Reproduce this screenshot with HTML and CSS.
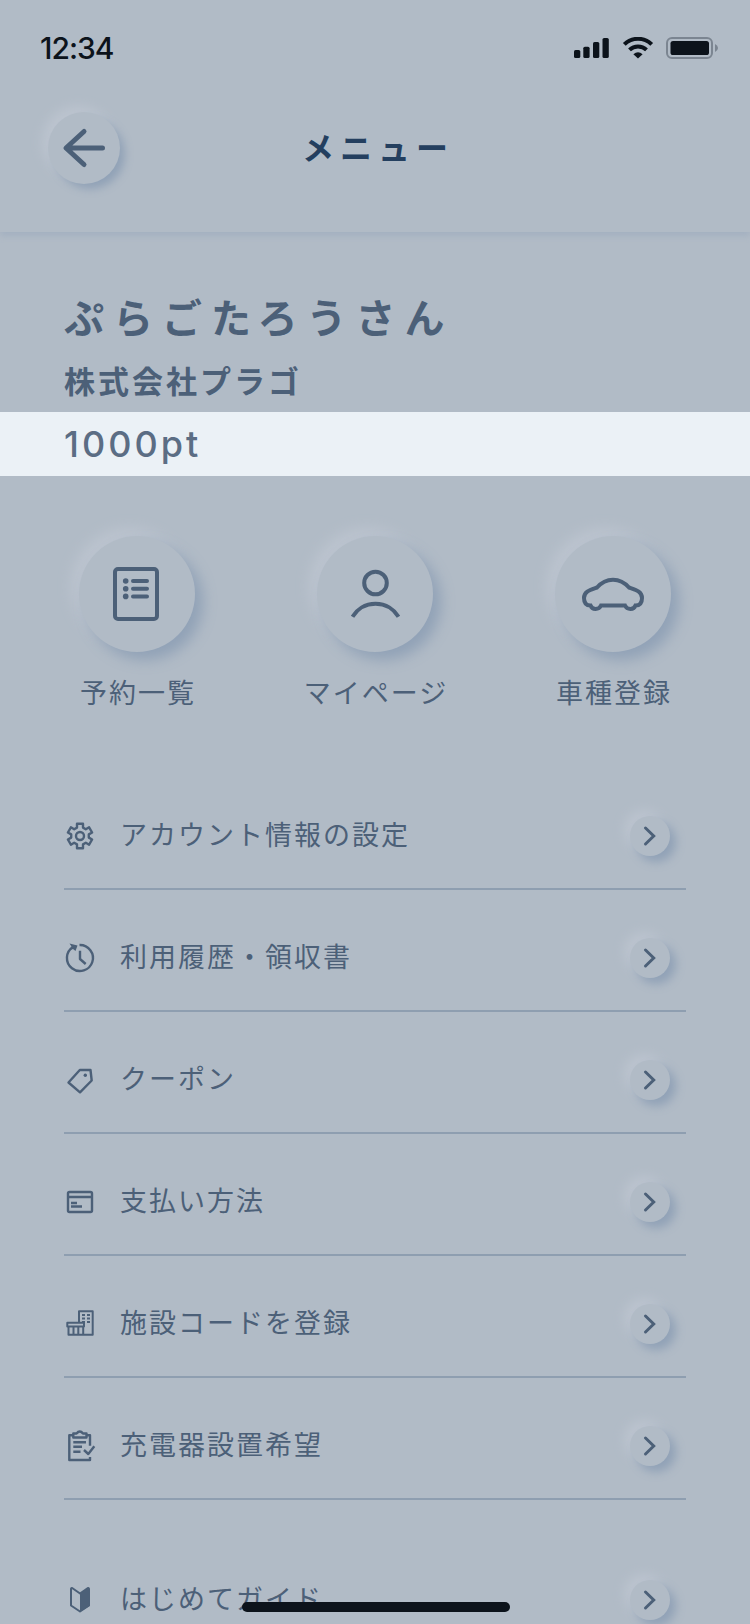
FILE: index.html
```html
<!DOCTYPE html>
<html lang="ja">
<head>
<meta charset="utf-8">
<meta name="viewport" content="width=device-width, initial-scale=1">
<title>メニュー</title>
<link rel="stylesheet" href="styles.css">
</head>
<body>
<div class="screen">
  <header class="header">
    <div class="status">
      <time class="clock">12:34</time>
      <div class="status-icons">
        <svg class="signal" viewBox="0 0 36 22" aria-hidden="true"><rect x="0" y="13" width="6.3" height="8" rx="1.6"/><rect x="9.3" y="9.7" width="6.3" height="11.3" rx="1.6"/><rect x="19" y="5" width="6.3" height="16" rx="1.6"/><rect x="28.5" y="1" width="6.3" height="20" rx="1.6"/></svg>
        <svg class="wifi" viewBox="0 0 30 22" aria-hidden="true"><path class="arc" d="M1.3 7.4A19.5 19.5 0 0 1 28.7 7.4M6.5 12.9A12.3 12.3 0 0 1 23.5 12.9"/><path d="M15 21.6L10.4 17.3Q15 13.4 19.6 17.3Z"/></svg>
        <svg class="battery" viewBox="0 0 54 22" aria-hidden="true"><rect class="case" x="1" y="1" width="45" height="20" rx="5"/><rect x="4.5" y="4" width="38.5" height="14" rx="2.6"/><path class="nub" d="M49 7Q52 8.500 52 11T49 15Z"/></svg>
      </div>
    </div>
    <div class="titlebar">
      <button class="back" type="button" aria-label="戻る"><svg viewBox="0 0 48 48" aria-hidden="true"><path d="M24 7.500L6 24L24 40.500M7 24H42.500"/><path class="tip" d="M6 24L12 18.500V29.500Z"/></svg></button>
      <h1 class="title">メニュー</h1>
    </div>
  </header>

  <main class="content">
    <section class="profile">
      <h2 class="name">ぷらごたろうさん</h2>
      <p class="company">株式会社プラゴ</p>
      <p class="points">1000pt</p>
    </section>

    <nav class="shortcuts" aria-label="ショートカット">
      <a class="shortcut" href="#reservations"><span class="disc"><svg viewBox="0 0 64 64" aria-hidden="true"><rect x="10" y="7" width="42" height="50" rx="3"/><path class="round" d="M28 19H42M28 26.700H42M28 34.400H42"/><g class="solid"><circle cx="20.700" cy="19" r="2.800"/><circle cx="20.700" cy="26.700" r="2.800"/><circle cx="20.700" cy="34.400" r="2.800"/></g></svg></span><span class="caption">予約一覧</span></a>
      <a class="shortcut" href="#mypage"><span class="disc"><svg viewBox="0 0 64 64" aria-hidden="true"><circle cx="32.500" cy="21" r="11.300"/><path d="M9.500 54.700A27 27 0 0 1 55.500 54.700"/></svg></span><span class="caption">マイページ</span></a>
      <a class="shortcut" href="#cars"><span class="disc"><svg viewBox="0 0 64 64" aria-hidden="true"><path d="M16 25.500C25 15 39 15 48 25.500C55 28 61 29.500 61 36C61 40 59.500 43.500 54.500 43.500C53 48 46 48 44 43.500H20C18 48 11 48 9.500 43.500C4.500 43.500 3 40 3 36C3 29.500 9 28 16 25.500Z"/></svg></span><span class="caption">車種登録</span></a>
    </nav>

    <ul class="menu">
      <li><a class="item" href="#account"><svg class="icon" viewBox="0 0 32 32" aria-hidden="true"><path d="M13 3.800H19V7.600L21.800 9.200L25.100 7.300L28.100 12.500L24.800 14.400V17.600L28.100 19.500L25.100 24.700L21.800 22.800L19 24.400V28.200H13V24.400L10.200 22.800L6.900 24.700L3.900 19.500L7.200 17.600V14.400L3.900 12.500L6.900 7.300L10.200 9.200L13 7.600Z"/><circle cx="16" cy="16" r="4"/></svg><span class="label">アカウント情報の設定</span><span class="go"><svg viewBox="0 0 24 24" aria-hidden="true"><path d="M7.500 4L15.700 12L7.500 20"/></svg></span></a></li>
      <li><a class="item" href="#history"><svg class="icon" viewBox="0 0 32 32" aria-hidden="true"><path d="M15.500 3A13 13 0 1 1 9 5M16 8.700V17L21.700 22"/><path class="solid" d="M5.500 1.500L13.500 3.500L11.500 9L9 7L6 8L7.500 4.500Z"/></svg><span class="label">利用履歴・領収書</span><span class="go"><svg viewBox="0 0 24 24" aria-hidden="true"><path d="M7.500 4L15.700 12L7.500 20"/></svg></span></a></li>
      <li><a class="item" href="#coupons"><svg class="icon" viewBox="0 0 32 32" aria-hidden="true"><path d="M4.500 18.500L15.800 6H26.500L27.700 16.500L16 28.300Z"/><circle class="solid" cx="21.300" cy="11.200" r="1.700"/></svg><span class="label">クーポン</span><span class="go"><svg viewBox="0 0 24 24" aria-hidden="true"><path d="M7.500 4L15.700 12L7.500 20"/></svg></span></a></li>
      <li><a class="item" href="#payment"><svg class="icon" viewBox="0 0 32 32" aria-hidden="true"><rect x="4" y="6" width="24" height="20" rx="1.500"/><path d="M4 11H28M7 17H13M7 20.500H18"/></svg><span class="label">支払い方法</span><span class="go"><svg viewBox="0 0 24 24" aria-hidden="true"><path d="M7.500 4L15.700 12L7.500 20"/></svg></span></a></li>
      <li><a class="item" href="#facility"><svg class="icon thin" viewBox="0 0 32 32" aria-hidden="true"><path d="M15 14V3.300H28.700V26.700H4.500V18.500M3.300 14.700H20V18.500H3.300ZM9.500 18.500V26M14.300 18.500V26M19.200 18.500V26"/><path class="dash" d="M18 7H26M18 10.500H26M18 14H26"/></svg><span class="label">施設コードを登録</span><span class="go"><svg viewBox="0 0 24 24" aria-hidden="true"><path d="M7.500 4L15.700 12L7.500 20"/></svg></span></a></li>
      <li><a class="item" href="#charger"><svg class="icon" viewBox="0 0 32 32" aria-hidden="true"><path d="M8.500 5.300H5.300V30H26V27M23 5.300H26V15.700M9.300 3.500H12.500Q15.800 -0.500 19 3.500H22.500V7.500H9.300ZM9.300 12.300H22M9.300 16.700H18M9.300 21.700H16.500M20 20L24.300 24L30.300 16.300"/></svg><span class="label">充電器設置希望</span><span class="go"><svg viewBox="0 0 24 24" aria-hidden="true"><path d="M7.500 4L15.700 12L7.500 20"/></svg></span></a></li>
      <li class="group-start"><a class="item" href="#guide"><svg class="icon thin" viewBox="0 0 32 32" aria-hidden="true"><path d="M7 5Q7 3.500 8.500 4.200L16 9.500L23.500 4.200Q25 3.500 25 5V21.500L16 27.500L7 21.500Z"/><path class="solid" d="M16 9.500L24 4L25.500 5V22L16 28Z"/></svg><span class="label">はじめてガイド</span><span class="go"><svg viewBox="0 0 24 24" aria-hidden="true"><path d="M7.500 4L15.700 12L7.500 20"/></svg></span></a></li>
    </ul>
  </main>
  <div class="home-indicator"></div>
</div>
</body>
</html>
```
FILE: styles.css
```css
:root {
  --surface: #b1bbc6;
  --ink: #4c6078;
  --title: #243f5f;
  --system: #0c131b;
  --rule: #8e9eb0;
  --light: #bcc4cf;
  --shade: #91a2b7;
}

* { box-sizing: border-box; }

body {
  margin: 0;
  background: var(--surface);
  color: var(--ink);
  font-family: "Noto Sans CJK JP", sans-serif;
}

h1, h2, p, ul { margin: 0; padding: 0; }
li { list-style: none; }
a { color: inherit; text-decoration: none; }
svg { display: block; }

.screen {
  position: relative;
  display: flex;
  flex-direction: column;
  height: 100vh;
  overflow: hidden;
}

.header {
  flex: none;
  box-shadow: 0 4px 6px #a4b1c1;
}

.status {
  display: flex;
  align-items: center;
  justify-content: space-between;
  height: 88px;
  padding: 8px 30px 0 40px;
}

.clock {
  color: var(--system);
  font: 500 30px/40px Inter, sans-serif;
  letter-spacing: -1px;
}

.status-icons {
  display: flex;
  align-items: center;
  gap: 12px;
  fill: var(--system);
}

.signal { width: 36px; height: 22px; }
.wifi { width: 32px; height: 22px; }
.battery { width: 54px; height: 22px; }
.arc { fill: none; stroke: var(--system); stroke-width: 4; }
.case { fill: none; stroke: #7b8591; stroke-width: 2; }
.nub { fill: #7b8591; }

.titlebar {
  display: grid;
  grid-template-columns: 72px 1fr 72px;
  align-items: center;
  padding: 24px 48px 48px;
}

.back {
  display: grid;
  place-items: center;
  width: 72px;
  height: 72px;
  padding: 0;
  border: 0;
  border-radius: 50%;
  background: var(--surface);
  box-shadow: 6px 6px 8px -1px var(--shade), -6px -6px 12px var(--light);
}

.back svg {
  width: 48px;
  height: 48px;
  fill: none;
  stroke: var(--ink);
  stroke-width: 5;
  stroke-linecap: round;
  stroke-linejoin: round;
}

.back .tip { fill: var(--ink); stroke: none; }

.title {
  padding: 0 0 4px 6px;
  color: var(--title);
  font-size: 32px;
  line-height: 48px;
  letter-spacing: 6px;
  text-align: center;
}

.content {
  flex: 1;
  min-height: 0;
  overflow-y: auto;
  scrollbar-width: none;
}

.profile { padding-top: 54px; }
.name, .company, .points { padding: 0 64px; }

.name {
  font-size: 40px;
  line-height: 60px;
  letter-spacing: 9px;
}

.company {
  padding-top: 12px;
  padding-bottom: 10px;
  font-size: 31px;
  font-weight: 700;
  line-height: 44px;
  letter-spacing: 3px;
}

.points {
  background: #ebf1f6;
  color: #5b6d84;
  font: 500 36px/64px Inter, sans-serif;
  letter-spacing: 3px;
}

.shortcuts {
  display: grid;
  grid-template-columns: repeat(3, 1fr);
  padding: 60px 18px 0;
}

.shortcut {
  display: flex;
  flex-direction: column;
  align-items: center;
  gap: 20px;
}

.disc {
  display: grid;
  place-items: center;
  width: 116px;
  height: 116px;
  border-radius: 50%;
  background: var(--surface);
  box-shadow: 8px 8px 14px var(--shade), -8px -8px 14px var(--light);
}

.disc svg {
  width: 64px;
  height: 64px;
  fill: none;
  stroke: var(--ink);
  stroke-width: 4;
}

.round { stroke-linecap: round; }
.solid, .icon .solid { fill: var(--ink); stroke: none; }

.caption, .label {
  font-size: 27px;
  font-weight: 400;
  line-height: 40px;
  letter-spacing: 2px;
}

.caption { padding-left: 2px; }

.menu { padding: 56px 64px 0; }

.item {
  display: flex;
  align-items: center;
  gap: 24px;
  padding: 48px 16px 32px 0;
  border-bottom: 2px solid var(--rule);
}

.group-start { padding-top: 32px; }

.label {
  flex: 1;
  line-height: 36px;
  padding-bottom: 4px;
}

.icon {
  width: 32px;
  height: 32px;
  overflow: visible;
  fill: none;
  stroke: var(--ink);
  stroke-width: 2.4;
  stroke-linejoin: round;
}

.icon.thin { stroke-width: 2; }
.dash { stroke-dasharray: 3 2; }

.go {
  display: grid;
  place-items: center;
  width: 40px;
  height: 40px;
  border-radius: 50%;
  background: var(--surface);
  box-shadow: 6px 6px 10px var(--shade), -6px -6px 12px var(--light);
}

.go svg {
  width: 24px;
  height: 24px;
  fill: none;
  stroke: var(--ink);
  stroke-width: 3;
  stroke-linecap: round;
}

.home-indicator {
  position: absolute;
  bottom: 12px;
  left: 50%;
  width: 268px;
  height: 10px;
  margin-left: -133px;
  border-radius: 5px;
  background: var(--system);
}
```
